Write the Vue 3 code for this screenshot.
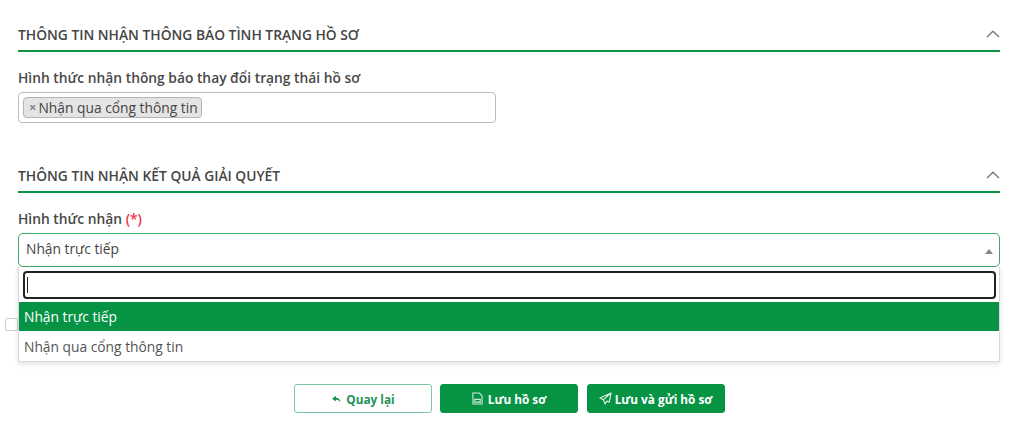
<script setup>
const options = [
  { label: 'Nhận trực tiếp', active: true },
  { label: 'Nhận qua cổng thông tin', active: false }
]
</script>

<template>
  <div class="page">
    <section class="first">
      <header class="head">
        <h2>THÔNG TIN NHẬN THÔNG BÁO TÌNH TRẠNG HỒ SƠ</h2>
        <svg class="chev" viewBox="0 0 14 8" width="14" height="8"><path d="M1 7L7 1.2L13 7" fill="none" stroke="#6f7f8f" stroke-width="1.5"/></svg>
      </header>
      <label class="lab">Hình thức nhận thông báo thay đổi trạng thái hồ sơ</label>
      <div class="multi">
        <span class="tag"><span class="x">×</span>Nhận qua cổng thông tin</span>
      </div>
    </section>

    <section class="second">
      <header class="head">
        <h2>THÔNG TIN NHẬN KẾT QUẢ GIẢI QUYẾT</h2>
        <svg class="chev" viewBox="0 0 14 8" width="14" height="8"><path d="M1 7L7 1.2L13 7" fill="none" stroke="#6f7f8f" stroke-width="1.5"/></svg>
      </header>
      <label class="lab">Hình thức nhận <span class="req">(*)</span></label>
      <div class="selectwrap">
        <div class="select">
          <span class="value">Nhận trực tiếp</span>
          <i class="arrow"></i>
        </div>
        <div class="drop">
          <div class="search"><span class="caret"></span></div>
          <div v-for="o in options" :key="o.label" class="opt" :class="{ active: o.active }">{{ o.label }}</div>
        </div>
      </div>
      <div class="checkrow"><span class="check"></span></div>
    </section>

    <footer class="actions">
      <button class="btn ghost">
        <svg viewBox="0 0 10 8" width="9" height="8"><path d="M4.2 0.5L0.3 3.7L4.2 6.9V4.8C6.4 4.8 8 5.4 9.4 7.3C9 4.6 7.2 2.7 4.2 2.6Z" fill="#0a8f47"/></svg>
        <span>Quay lại</span>
      </button>
      <button class="btn solid">
        <svg viewBox="0 0 12 14" width="11" height="13"><path d="M1 1H8L11 4V13H1Z M3 8H9V11H3Z" fill="none" stroke="#cfe8d9" stroke-width="1.2"/></svg>
        <span>Lưu hồ sơ</span>
      </button>
      <button class="btn solid send">
        <svg viewBox="0 0 14 14" width="13" height="13"><path d="M13 1L1 6.5L4.8 8.3L6.5 12.8L8.5 9.8L11 11ZM13 1L4.8 8.3" fill="none" stroke="#dff1e6" stroke-width="1.2" stroke-linejoin="round"/></svg>
        <span>Lưu và gửi hồ sơ</span>
      </button>
    </footer>
  </div>
</template>

<style scoped>
.page {
  width: 1024px;
  height: 439px;
  box-sizing: border-box;
  padding: 24px 24px 0 18px;
  font-family: "Open Sans", "Noto Sans", sans-serif;
  font-size: 13.8px;
  color: #3a3a3a;
  background: #fff;
  overflow: hidden;
}
.head {
  display: flex;
  align-items: flex-start;
  justify-content: space-between;
  height: 26px;
  border-bottom: 2px solid #0b9444;
}
.head h2 {
  margin: 1px 0 0;
  font-size: 13.8px;
  font-weight: 600;
  line-height: 20px;
  color: #444;
}
.chev { margin-top: 6px; }
.lab {
  display: block;
  margin-top: 16px;
  line-height: 20px;
  font-weight: 600;
  color: #484848;
}
.req { color: #ee3347; }
.multi {
  margin-top: 4px;
  width: 478px;
  height: 31px;
  box-sizing: border-box;
  border: 1px solid #bdbdbd;
  border-radius: 4px;
  padding: 4px;
}
.tag {
  display: inline-flex;
  align-items: center;
  height: 21px;
  box-sizing: border-box;
  padding: 0 3px 0 5px;
  background: #e4e4e4;
  border: 1px solid #b4b4b4;
  border-radius: 4px;
  line-height: 19px;
  color: #444;
}
.x { color: #888; font-size: 13px; font-weight: 700; margin-right: 2px; }
.second { margin-top: 42px; }
.selectwrap { position: relative; margin-top: 4px; }
.select {
  display: flex;
  align-items: center;
  justify-content: space-between;
  height: 34px;
  box-sizing: border-box;
  border: 1px solid #3aa866;
  border-radius: 5px;
  padding: 0 7px;
  color: #444;
}
.value { margin-bottom: 3px; }
.arrow {
  width: 0; height: 0;
  border-left: 4px solid transparent;
  border-right: 4px solid transparent;
  border-bottom: 5px solid #888;
  margin-top: 2px;
  margin-right: -1px;
}
.drop {
  position: absolute;
  z-index: 2;
  left: 0; right: 0; top: 34px;
  height: 95px;
  box-sizing: border-box;
  background: #fff;
  border: 1px solid #d6dbe0;
  border-top: none;
  box-shadow: 0 2px 5px rgba(0,0,0,.12);
}
.search {
  margin: 4px 3px 3px 4px;
  height: 28px;
  box-sizing: border-box;
  border: 2px solid #222;
  border-radius: 4px;
  padding: 4px 2px;
}
.caret { display: block; width: 1px; height: 16px; background: #222; }
.opt {
  height: 30px;
  line-height: 29px;
  padding: 0 5px;
  color: #555;
}
.opt.active { height: 29px; margin-bottom: 1px; background: #069344; color: #fff; }
.checkrow { margin: 51px 0 0 -13px; height: 14px; }
.check {
  display: block;
  width: 13px; height: 13px;
  box-sizing: border-box;
  border: 1px solid #ccc;
  border-radius: 2px;
}
.actions {
  display: flex;
  justify-content: center;
  gap: 8.5px;
  margin-top: 52px;
}
.btn {
  display: inline-flex;
  align-items: center;
  justify-content: center;
  gap: 5px;
  width: 138px;
  height: 29px;
  box-sizing: border-box;
  border-radius: 3px;
  font-family: inherit;
  font-size: 11.8px;
  font-weight: 700;
  padding: 0;
}
.ghost { background: #fff; border: 1px solid #7cc8a0; color: #23915a; padding-left: 2px; }
.solid { background: #069344; border: 1px solid #069344; color: #fff; }
.send { gap: 3px; }
</style>
